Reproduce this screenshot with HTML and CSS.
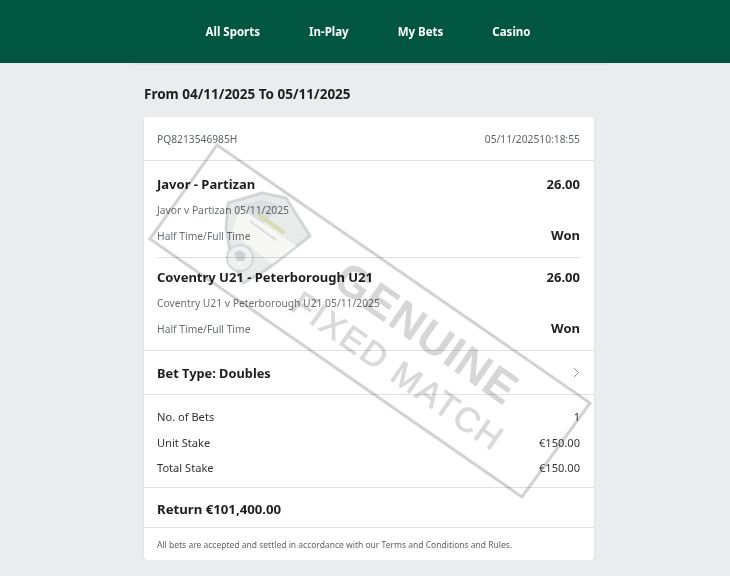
FILE: index.html
```html
<!DOCTYPE html>
<html lang="en">
<head>
<meta charset="UTF-8">
<meta name="viewport" content="width=device-width, initial-scale=1.0">
<title>Bet History</title>
<link rel="stylesheet" href="styles.css">
</head>
<body>
<div class="navbar">
    <a href="#">All Sports</a>
    <a href="#">In-Play</a>
    <a href="#">My Bets</a>
    <a href="#">Casino</a>
</div>
<div class="container">
    <div class="topline"></div>
    <h2 class="range">From 04/11/2025 To 05/11/2025</h2>
    <div class="card">
        <div class="section head-row">
            <span>PQ8213546985H</span>
            <span>05/11/2025<span class="time">10:18:55</span></span>
        </div>
        <div class="section legs">
            <div class="leg">
                <div class="row"><span class="leg-name">Javor - Partizan</span><span class="leg-name">26.00</span></div>
                <div class="row match"><span>Javor v Partizan 05/11/2025</span></div>
                <div class="row market"><span>Half Time/Full Time</span><span class="won">Won</span></div>
            </div>
            <div class="leg">
                <div class="row"><span class="leg-name">Coventry U21 - Peterborough U21</span><span class="leg-name">26.00</span></div>
                <div class="row match"><span>Coventry U21 v Peterborough U21 05/11/2025</span></div>
                <div class="row market"><span>Half Time/Full Time</span><span class="won">Won</span></div>
            </div>
        </div>
        <div class="section bet-type">
            <span>Bet Type: Doubles</span>
            <svg class="chevron" width="7" height="11" viewBox="0 0 7 11"><path d="M1 1l4.5 4.5L1 10" fill="none" stroke="#8a9094" stroke-width="1"/></svg>
        </div>
        <div class="section stakes">
            <div class="row"><span>No. of Bets</span><span>1</span></div>
            <div class="row"><span>Unit Stake</span><span>€150.00</span></div>
            <div class="row"><span>Total Stake</span><span>€150.00</span></div>
        </div>
        <div class="section return">Return €101,400.00</div>
        <div class="terms">All bets are accepted and settled in accordance with our Terms and Conditions and Rules.</div>
    </div>
</div>

<!-- stamp sits over the card -->
<svg class="stamp" width="730" height="576" viewBox="0 0 730 576">
    <path d="M217 145L590 403 522 497 150 239Z" fill="none" stroke="#d2d2d2" stroke-width="3"/>
    <path d="M228 203L262 193 286 198 310 236 266 270 243 283 232 262 226 228Z" fill="#e9ebeb" stroke="#d2d5d7" stroke-width="3" stroke-linejoin="round"/>
    <path d="M236 206L262 200 281 205 262 226 240 240Z" fill="#dcdfe1"/>
    <path d="M240 208L296 246 272 264 232 232Z" fill="#f7f7f4"/>
    <path d="M258 214L284 233" stroke="#d8dab0" stroke-width="4" fill="none"/>
    <path d="M250 221L276 240" stroke="#d8dadb" stroke-width="2" fill="none"/>
    <circle cx="240" cy="258" r="13" fill="#eff0f0" stroke="#d4d6d7" stroke-width="2"/>
    <path d="M234 253l6-3 6 4-2 7h-7z" fill="#d0d2d4"/>
    <text class="stamp-big" transform="translate(331 285) rotate(35)">GENUINE</text>
    <text class="stamp-small" transform="translate(289 309) rotate(35)">FIXED MATCH</text>
</svg>
</body>
</html>
```
FILE: styles.css
```css
body {
  margin: 0;
  background-color: #ebecee;
  font-family: "Noto Sans", "Open Sans", Arial, sans-serif;
  color: #1e1e1e;
  overflow: hidden;
}

.navbar {
  background-color: #015642;
  height: 63px;
  display: flex;
  justify-content: center;
  align-items: center;
  gap: 49px;
  padding-left: 6px;
}
.navbar a {
  color: white;
  text-decoration: none;
  font-size: 11.5px;
  font-weight: 700;
}

.container {
  width: 450px;
  margin-left: 144px;
}
.topline {
  height: 2px;
  margin: 0 -14px;
  background-color: #e3e4e6;
}
.range {
  margin: 0;
  padding-top: 20px;
  height: 32px;
  font-size: 13.5px;
  font-weight: 700;
  line-height: 19px;
}

.card {
  background-color: white;
  border-radius: 3px;
  box-shadow: 0 1px 2px rgba(0, 0, 0, 0.12);
}
.section {
  padding: 0 14px 0 13px;
  border-bottom: 1px solid #dfe1e3;
}
.row {
  display: flex;
  justify-content: space-between;
  align-items: center;
}

.head-row {
  height: 43px;
  display: flex;
  justify-content: space-between;
  align-items: center;
  font-size: 10.25px;
  color: #5f6468;
}

.leg {
  height: 92px;
}
.leg:first-child {
  padding-top: 4px;
}
.leg + .leg {
  border-top: 1px solid #dfe1e3;
}
.leg-name {
  font-size: 13px;
  font-weight: 700;
  line-height: 38px;
}
.match {
  font-size: 10.3px;
  color: #6a6f73;
  line-height: 14px;
}
.market {
  font-size: 10.3px;
  color: #6a6f73;
  height: 38px;
}
.won {
  font-size: 13px;
  font-weight: 700;
  color: #1e1e1e;
  margin-top: -2px;
}

.bet-type {
  height: 43px;
  display: flex;
  justify-content: space-between;
  align-items: center;
  font-size: 12.8px;
  font-weight: 700;
}

.stakes {
  padding-top: 9px;
  padding-bottom: 6px;
  font-size: 11.1px;
  color: #333;
}
.stakes .row {
  height: 25.5px;
}

.return {
  height: 39px;
  line-height: 42px;
  font-size: 13.2px;
  font-weight: 700;
}

.terms {
  padding: 0 14px 0 13px;
  height: 32px;
  line-height: 33px;
  font-size: 8.5px;
  color: #5f6468;
}

.stamp {
  position: absolute;
  left: 0;
  top: 0;
  pointer-events: none;
  mix-blend-mode: multiply;
}
.stamp-big {
  font-family: "Liberation Sans", Arial, sans-serif;
  font-size: 45px;
  font-weight: 700;
  letter-spacing: 1px;
  fill: #d6d6d6;
}
.stamp-small {
  font-family: "Liberation Sans", Arial, sans-serif;
  font-size: 34px;
  letter-spacing: 2px;
  fill: #d9d9d9;
  stroke: #d9d9d9;
  stroke-width: 0.8px;
}
```
